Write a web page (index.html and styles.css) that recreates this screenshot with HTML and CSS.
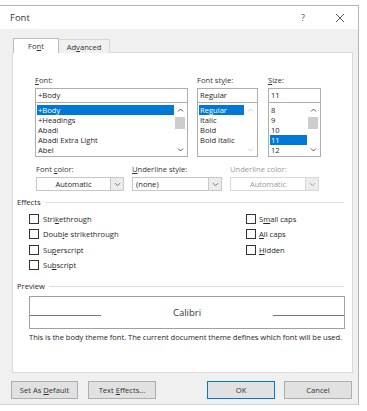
FILE: index.html
```html
<!DOCTYPE html>
<html>
<head>
<meta charset="utf-8">
<link rel="stylesheet" href="styles.css">
</head>
<body>
<div class="window">
  <div class="titlebar">
    <span class="title">Font</span>
    <span class="help">?</span>
    <svg class="close" width="10" height="10" viewBox="0 0 10 10"><path d="M1 1L9 9M9 1L1 9" stroke="#444" stroke-width="0.9" fill="none"/></svg>
  </div>
  <div class="body">
    <div class="tabs">
      <div class="tab active"><span>Fo<u>n</u>t</span></div>
      <div class="tab"><span>Ad<u>v</u>anced</span></div>
    </div>
    <div class="panel">
      <div class="pickers">
        <div class="picker p-font">
          <div class="label"><u>F</u>ont:</div>
          <div class="input">+Body</div>
          <div class="list">
            <div class="items">
              <div class="item sel">+Body</div>
              <div class="item">+Headings</div>
              <div class="item">Abadi</div>
              <div class="item">Abadi Extra Light</div>
              <div class="item">Abel</div>
            </div>
            <div class="sb">
              <svg class="arr" width="9" height="6" viewBox="0 0 9 6"><path d="M2 4.5L4.5 2L7 4.5" stroke="#555" stroke-width="1" fill="none"/></svg>
              <div class="track"><div class="thumb"></div></div>
              <svg class="arr" width="9" height="6" viewBox="0 0 9 6"><path d="M2 1.5L4.5 4L7 1.5" stroke="#555" stroke-width="1" fill="none"/></svg>
            </div>
          </div>
        </div>
        <div class="picker p-style">
          <div class="label">Font st<u>y</u>le:</div>
          <div class="input">Regular</div>
          <div class="list">
            <div class="items">
              <div class="item sel">Regular</div>
              <div class="item">Italic</div>
              <div class="item">Bold</div>
              <div class="item">Bold Italic</div>
            </div>
            <div class="sb faded">
              <svg class="arr" width="9" height="6" viewBox="0 0 9 6"><path d="M2 4.5L4.5 2L7 4.5" stroke="#ccc" stroke-width="1" fill="none"/></svg>
              <div class="track"></div>
              <svg class="arr" width="9" height="6" viewBox="0 0 9 6"><path d="M2 1.5L4.5 4L7 1.5" stroke="#ccc" stroke-width="1" fill="none"/></svg>
            </div>
          </div>
        </div>
        <div class="picker p-size">
          <div class="label"><u>S</u>ize:</div>
          <div class="input">11</div>
          <div class="list">
            <div class="items">
              <div class="item">8</div>
              <div class="item">9</div>
              <div class="item">10</div>
              <div class="item sel">11</div>
              <div class="item">12</div>
            </div>
            <div class="sb">
              <svg class="arr" width="9" height="6" viewBox="0 0 9 6"><path d="M2 4.5L4.5 2L7 4.5" stroke="#555" stroke-width="1" fill="none"/></svg>
              <div class="track"><div class="thumb"></div></div>
              <svg class="arr" width="9" height="6" viewBox="0 0 9 6"><path d="M2 1.5L4.5 4L7 1.5" stroke="#555" stroke-width="1" fill="none"/></svg>
            </div>
          </div>
        </div>
      </div>

      <div class="combos">
        <div class="combo c1">
          <div class="label">Font <u>c</u>olor:</div>
          <div class="select center"><span class="val">Automatic</span><span class="drop"><svg width="7" height="5" viewBox="0 0 7 5"><path d="M1 1.2L3.5 3.7L6 1.2" stroke="#666" stroke-width="0.9" fill="none"/></svg></span></div>
        </div>
        <div class="combo c2">
          <div class="label"><u>U</u>nderline style:</div>
          <div class="select"><span class="val">(none)</span><span class="drop"><svg width="7" height="5" viewBox="0 0 7 5"><path d="M1 1.2L3.5 3.7L6 1.2" stroke="#666" stroke-width="0.9" fill="none"/></svg></span></div>
        </div>
        <div class="combo c3 disabled">
          <div class="label">Underline color:</div>
          <div class="select center"><span class="val">Automatic</span><span class="drop"><svg width="7" height="5" viewBox="0 0 7 5"><path d="M1 1.2L3.5 3.7L6 1.2" stroke="#999" stroke-width="0.9" fill="none"/></svg></span></div>
        </div>
      </div>

      <div class="group-head"><span>Effects</span><span class="rule"></span></div>
      <div class="effects">
        <div class="col">
          <div class="cb"><span class="box"></span><span>Stri<u>k</u>ethrough</span></div>
          <div class="cb"><span class="box"></span><span>Doub<u>l</u>e strikethrough</span></div>
          <div class="cb"><span class="box"></span><span>Su<u>p</u>erscript</span></div>
          <div class="cb"><span class="box"></span><span>Su<u>b</u>script</span></div>
        </div>
        <div class="col right">
          <div class="cb"><span class="box"></span><span>S<u>m</u>all caps</span></div>
          <div class="cb"><span class="box"></span><span><u>A</u>ll caps</span></div>
          <div class="cb"><span class="box"></span><span><u>H</u>idden</span></div>
        </div>
      </div>

      <div class="group-head preview-head"><span>Preview</span><span class="rule"></span></div>
      <div class="preview">
        <span class="pline"></span>
        <span class="sample">Calibri</span>
        <span class="pline"></span>
      </div>
      <div class="desc">This is the body theme font. The current document theme defines which font will be used.</div>
    </div>

    <div class="buttons">
      <div class="btn"><span>Set As <u>D</u>efault</span></div>
      <div class="btn"><span>Text <u>E</u>ffects...</span></div>
      <div class="spacer"></div>
      <div class="btn ok"><span>OK</span></div>
      <div class="btn"><span>Cancel</span></div>
    </div>
  </div>
</div>
</body>
</html>
```

FILE: styles.css
```css
* { box-sizing: border-box; }
html, body { margin: 0; padding: 0; background: #fff; }
body {
  font-family: "Open Sans", "Noto Sans", "DejaVu Sans", sans-serif;
  font-size: 7.6px;
  color: #262626;
  width: 367px;
  height: 411px;
  overflow: hidden;
}
u { text-decoration-thickness: 0.6px; text-underline-offset: 1px; }

.window {
  margin-top: 5px;
  width: 359px;
  border-top: 1px solid #b5b5b5;
  border-right: 1px solid #b5b5b5;
  border-bottom: 1px solid #d0d0d0;
}

.titlebar {
  height: 23px;
  background: #fff;
  display: flex;
  align-items: center;
  padding-left: 10px;
}
.title { font-size: 9.5px; color: #333; }
.help { margin-left: auto; font-size: 9px; color: #555; margin-right: 30px; }
.close { margin-right: 13px; }

.body {
  background: #f0f0f0;
  padding: 9px 6px 5px 12px;
}

.tabs { display: flex; height: 14px; padding-left: 1px; }
.tab {
  border: 1px solid #d6d6d6;
  border-bottom: none;
  height: 14px;
  display: flex;
  align-items: center;
  justify-content: center;
  font-size: 7.6px;
  color: #333;
}
.tab.active { width: 46px; background: #fff; border-color: #bcbcbc; position: relative; z-index: 1; height: 15px; }
.tab:not(.active) { width: 51px; background: #f0f0f0; margin-top: 1px; border-left: none; }

.panel {
  background: #fff;
  border: 1px solid #dadada;
  width: 341px;
  height: 321px;
  padding: 22px 8px 0 3px;
}

.label { height: 10px; line-height: 10px; margin-bottom: 3px; color: #333; }

.pickers { display: flex; margin-left: 19px; gap: 9px; }
.p-font { width: 153px; }
.p-style { width: 61px; margin-left: 0; }
.p-size { width: 53px; margin-left: 1px; }

.input {
  height: 15px;
  border: 1px solid #aeaeae;
  padding-left: 2px;
  line-height: 13px;
  background: #fff;
}
.list {
  height: 54px;
  border: 1px solid #aeaeae;
  border-top: none;
  display: flex;
  padding: 2px 1px 1px 1px;
}
.items { flex: 1; }
.item { height: 10px; line-height: 10px; padding-left: 1px; }
.item.sel { background: #0078d7; color: #fff; }
.sb { width: 12px; display: flex; flex-direction: column; align-items: center; }
.sb .arr { margin: 2px 0; }
.track { flex: 1; width: 12px; }
.thumb { width: 10px; height: 12px; background: #cdcdcd; margin: 2px auto 0; }

.combos { display: flex; margin-left: 20px; margin-top: 7px; }
.c1 { width: 88px; }
.c2 { width: 90px; margin-left: 8px; }
.c3 { width: 89px; margin-left: 8px; }
.label + .select { margin-top: 1px; }
.select {
  height: 14px;
  border: 1px solid #c8c8c8;
  display: flex;
  align-items: stretch;
  background: #fff;
}
.select .val { flex: 1; line-height: 12px; padding-left: 3px; }
.select.center .val { text-align: center; padding-left: 0; }
.drop {
  width: 13px;
  border-left: 1px solid #c8c8c8;
  background: #ececec;
  display: flex;
  align-items: center;
  justify-content: center;
}
.disabled .label, .disabled .val { color: #9a9a9a; }
.disabled .select { border-color: #d8d8d8; }
.disabled .drop { border-left-color: #d8d8d8; }

.group-head {
  display: flex;
  align-items: center;
  height: 10px;
  margin-top: 6px;
  margin-left: 1px;
}
.group-head .rule { flex: 1; height: 1px; background: #dedede; margin-left: 4px; }
.preview-head { margin-top: 8px; }

.effects { display: flex; margin-left: 13px; margin-top: 4px; }
.effects .col { width: 217px; }
.effects .col.right { width: auto; }
.cb { height: 15.5px; display: flex; align-items: center; }
.box {
  width: 10px; height: 10px;
  border: 1px solid #333;
  background: #fff;
  margin-right: 4px;
}
.right .box { margin-right: 3px; }

.preview {
  margin-left: 13px;
  margin-top: 5px;
  width: 316px;
  height: 33px;
  border: 1px solid #a0a0a0;
  display: flex;
  align-items: center;
  justify-content: space-between;
}
.pline { width: 71px; height: 1px; background: #777; margin-top: 6px; }
.sample { font-size: 9.5px; color: #333; }
.desc { margin-left: 13px; margin-top: 3px; height: 10px; line-height: 10px; white-space: nowrap; letter-spacing: -0.05px; }

.buttons { display: flex; margin-top: 8px; margin-left: -1px; }
.btn {
  width: 68px;
  height: 18px;
  border: 1px solid #adadad;
  background: #e1e1e1;
  display: flex;
  align-items: center;
  justify-content: center;
  color: #333;
  margin-right: 9px;
}
.btn:first-child { width: 67px; margin-right: 10px; }
.btn:last-child { margin-right: 0; }
.spacer { flex: 1; }
.btn.ok { border: 1px solid #0078d7; }
```
